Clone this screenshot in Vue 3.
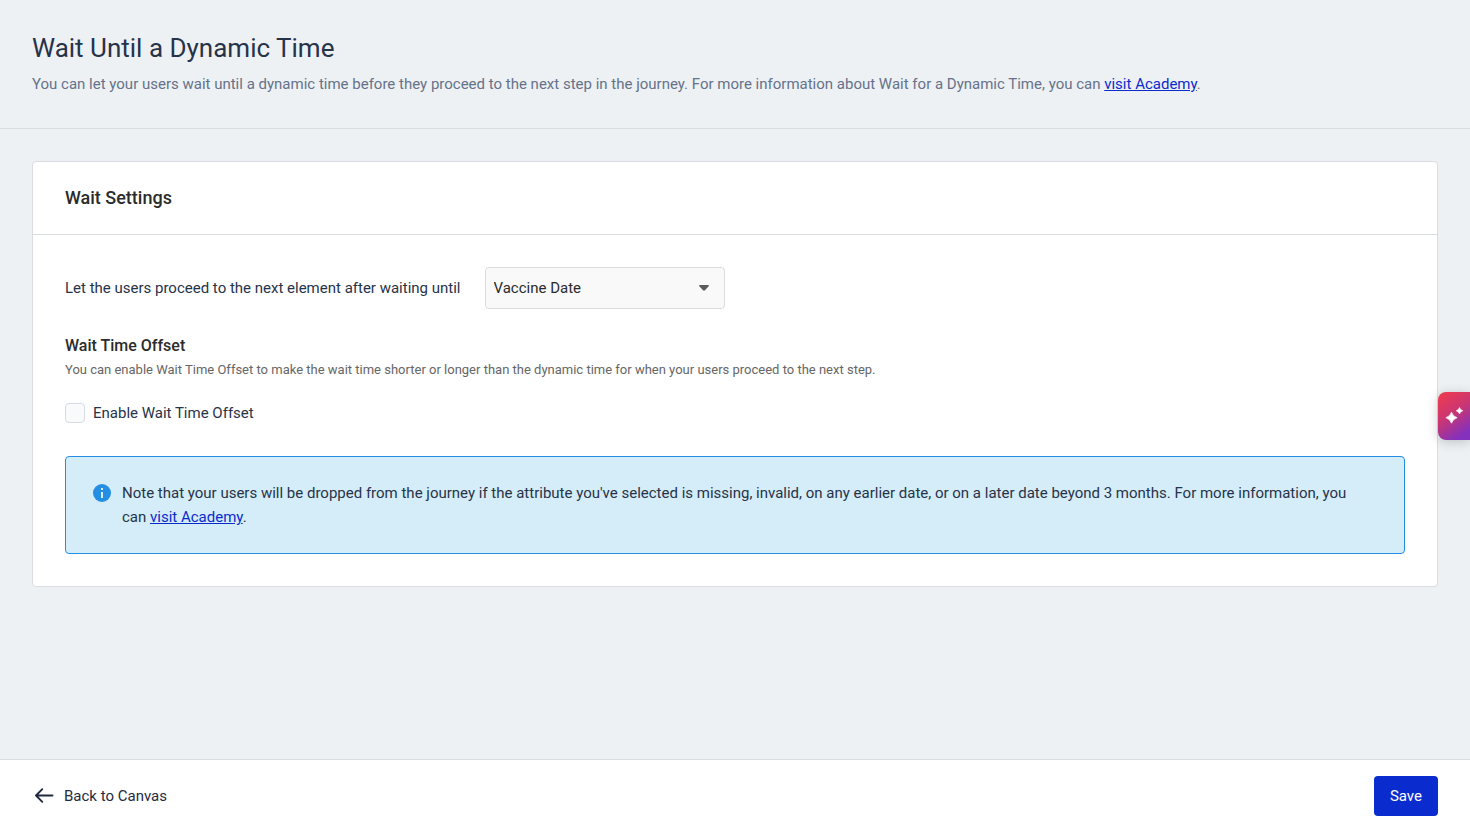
<script setup>
import { ref } from 'vue'

const attribute = ref('Vaccine Date')
const offsetEnabled = ref(false)
</script>

<template>
  <div class="page">
    <header class="page-header">
      <h1>Wait Until a Dynamic Time</h1>
      <p>
        You can let your users wait until a dynamic time before they proceed to the next step in the journey. For more
        information about Wait for a Dynamic Time, you can <a href="#academy">visit Academy</a>.
      </p>
    </header>

    <main>
      <section class="card">
        <h2>Wait Settings</h2>
        <div class="card-body">
          <div class="field">
            <label for="attribute">Let the users proceed to the next element after waiting until</label>
            <div class="select">
              <select id="attribute" v-model="attribute">
                <option>Vaccine Date</option>
              </select>
              <svg class="caret" viewBox="0 0 12 8" aria-hidden="true">
                <path d="M2 1h8q1.300 0 .9 1L7 6.200q-1 .9-2 0L1.100 2Q.7 1 2 1z" fill="#5c5c5c" />
              </svg>
            </div>
          </div>

          <h3>Wait Time Offset</h3>
          <p class="hint">
            You can enable Wait Time Offset to make the wait time shorter or longer than the dynamic time for when your
            users proceed to the next step.
          </p>

          <label class="check">
            <input v-model="offsetEnabled" type="checkbox" />
            <span>Enable Wait Time Offset</span>
          </label>

          <div class="note">
            <svg class="info" viewBox="0 0 18 18" aria-hidden="true">
              <circle cx="9" cy="9" r="9" fill="#248ee3" />
              <rect x="8" y="4" width="2" height="2" fill="#d4edf9" />
              <rect x="8" y="8" width="2" height="6" fill="#d4edf9" />
            </svg>
            <p>
              Note that your users will be dropped from the journey if the attribute you've selected is missing,
              invalid, on any earlier date, or on a later date beyond 3 months. For more information, you can
              <a href="#academy">visit Academy</a>.
            </p>
          </div>
        </div>
      </section>
    </main>

    <footer>
      <a class="back" href="#canvas">
        <svg viewBox="0 0 24 24" aria-hidden="true">
          <path d="M20.500 11.500H4M10.300 5.200L4 11.500l6.300 6.300" fill="none" stroke="#1f2a3f" stroke-width="1.900" stroke-linecap="round" stroke-linejoin="round" />
        </svg>
        <span>Back to Canvas</span>
      </a>
      <button class="save" type="button">Save</button>
    </footer>

    <button class="assistant" type="button" aria-label="Open assistant">
      <svg viewBox="0 0 20 20" aria-hidden="true">
        <path d="M6.500 6.200Q7.700 10.300 12.100 11.700Q7.700 13 6.500 17.200Q5.300 13 .9 11.700Q5.300 10.300 6.500 6.200z" fill="#fff" stroke="#fff" stroke-width=".8" stroke-linejoin="round" />
        <path d="M14.500 1.500Q15.200 4 17.900 4.700Q15.200 5.400 14.500 7.900Q13.800 5.400 11.100 4.700Q13.800 4 14.500 1.500z" fill="#fff" stroke="#fff" stroke-width=".6" stroke-linejoin="round" />
      </svg>
    </button>
  </div>
</template>

<style>
body {
  margin: 0;
}
</style>

<style scoped>
.page {
  box-sizing: border-box;
  min-height: 100vh;
  display: flex;
  flex-direction: column;
  background: #edf1f4;
  color: #273349;
  font: 15px/24px Roboto, "Liberation Sans", sans-serif;
}

h1,
h2,
h3,
p {
  margin: 0;
}

a {
  color: #0a2bce;
}

.page-header {
  padding: 32px;
  border-bottom: 1px solid #d9dde2;
}

h1 {
  font-size: 26px;
  line-height: 32px;
  font-weight: 400;
  margin-bottom: 8px;
}

.page-header p {
  color: #66718a;
}

main {
  flex: 1;
  padding: 32px;
}

.card {
  background: #fff;
  border: 1px solid #d9dde2;
  border-radius: 4px;
}

h2 {
  padding: 24px 32px;
  border-bottom: 1px solid #d9dde2;
  color: #2b2b2b;
  font-size: 18px;
  line-height: 24px;
  font-weight: 500;
}

.card-body {
  padding: 32px;
}

.field {
  display: flex;
  align-items: center;
  gap: 24px;
  margin-bottom: 25px;
}

.select {
  position: relative;
  width: 240px;
}

select {
  box-sizing: border-box;
  display: block;
  width: 100%;
  height: 42px;
  padding: 0 8px;
  appearance: none;
  background: #f9f9f9;
  border: 1px solid #dcdcdc;
  border-radius: 4px;
  color: #2b2b2b;
  font: inherit;
}

.caret {
  position: absolute;
  top: 17px;
  right: 15px;
  width: 12px;
  height: 8px;
  pointer-events: none;
}

h3 {
  color: #2b2b2b;
  font-size: 16px;
  line-height: 24px;
  font-weight: 500;
}

.hint {
  color: #666;
  font-size: 13px;
  line-height: 24px;
  margin-bottom: 19px;
}

.check {
  display: flex;
  align-items: center;
  gap: 8px;
  margin-bottom: 31px;
}

.check input {
  box-sizing: border-box;
  width: 20px;
  height: 20px;
  margin: 0;
  appearance: none;
  background: #f8fafc;
  border: 1px solid #d5dae6;
  border-radius: 4px;
}

.check input:checked {
  background: #0a2bce;
}

.note {
  display: flex;
  gap: 11px;
  padding: 24px 36px 24px 27px;
  background: #d4edf9;
  border: 1px solid #248ee3;
  border-radius: 4px;
}

.info {
  flex: none;
  width: 18px;
  height: 18px;
  margin-top: 3px;
}

footer {
  display: flex;
  align-items: center;
  justify-content: space-between;
  padding: 16px 32px 15px;
  background: #fff;
  border-top: 1px solid #d9dde2;
}

.back {
  display: flex;
  align-items: center;
  gap: 8px;
  color: #1f2a3f;
  text-decoration: none;
}

.back svg {
  width: 24px;
  height: 24px;
}

.save {
  height: 40px;
  padding: 0 16px;
  background: #0a2bce;
  border: 0;
  border-radius: 4px;
  color: #fff;
  font: inherit;
}

.assistant {
  position: fixed;
  top: calc(50% - 24px);
  right: 0;
  box-sizing: border-box;
  width: 32px;
  height: 48px;
  padding: 0 0 0 7px;
  border: 0;
  border-radius: 8px 0 0 8px;
  background: linear-gradient(145deg, #e93a55 10%, #c93673 45%, #8431bd 85%);
  box-shadow: 0 2px 12px rgba(0, 0, 0, 0.2);
}

.assistant svg {
  display: block;
  width: 20px;
  height: 20px;
}
</style>
